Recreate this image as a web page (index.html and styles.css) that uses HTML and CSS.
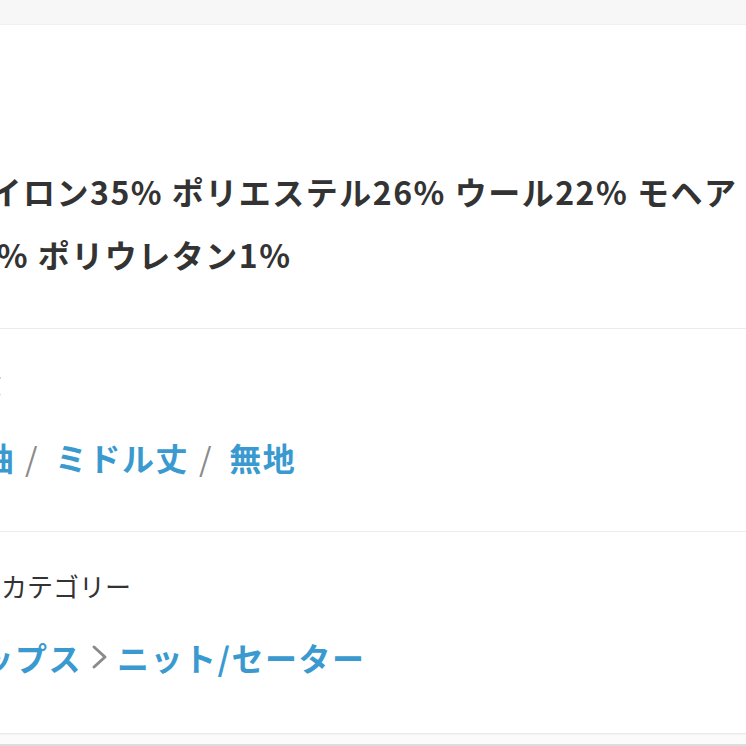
FILE: index.html
```html
<!DOCTYPE html>
<html lang="ja">
<head>
<meta charset="utf-8">
<link rel="stylesheet" href="styles.css">
</head>
<body>
<div class="topbar"></div>
<main class="page">
  <section class="sec sec-material">
    <p class="material">ナイロン35% ポリエステル26% ウール22% モヘア<br>16% ポリウレタン1%</p>
  </section>
  <section class="sec sec-feature">
    <div class="label">特徴</div>
    <div class="links">
      <a class="link">長袖</a><span class="sep">/</span><a class="link">ミドル丈</a><span class="sep">/</span><a class="link">無地</a>
    </div>
  </section>
  <section class="sec sec-category">
    <div class="label">商品カテゴリー</div>
    <div class="links crumbs">
      <a class="link">トップス</a><span class="chev"><svg width="18" height="26" viewBox="0 0 18 26"><path d="M4 3 L15 13 L4 23" fill="none" stroke="#8a8a8a" stroke-width="3" stroke-linecap="round" stroke-linejoin="round"/></svg></span><a class="link">ニット/セーター</a>
    </div>
  </section>
  <div class="footband"></div>
</main>
</body>
</html>
```
FILE: styles.css
```css
html, body {
  margin: 0;
  padding: 0;
  background: #ffffff;
  overflow: hidden;
  width: 746px;
  height: 746px;
}
body {
  font-family: "Noto Sans CJK JP", "Noto Sans", sans-serif;
  color: #333333;
}
.topbar {
  height: 24px;
  background: #f7f7f7;
  border-bottom: 1px solid #f0f0f0;
}
.page {
  margin-left: -44px;
  width: 790px;
}
.sec {
  border-bottom: 1px solid #ececec;
}
.sec-material {
  padding-top: 135px;
  padding-bottom: 42px;
}
.material {
  margin: 0;
  font-size: 32px;
  font-weight: 700;
  line-height: 63px;
  letter-spacing: 1.5px;
  white-space: nowrap;
}
.sec-feature {
  padding-top: 36px;
  padding-bottom: 50px;
}
.sec-category {
  padding-top: 36px;
  padding-bottom: 52px;
}
.label {
  margin-left: -7px;
  font-size: 26px;
  line-height: 36px;
  font-weight: 400;
  color: #333333;
}
.links {
  margin-top: 32px;
  margin-left: -8px;
  display: flex;
  align-items: center;
  height: 48px;
  font-size: 32px;
  font-weight: 700;
  letter-spacing: 1.5px;
}
.crumbs {
  margin-top: 29px;
  margin-left: -8px;
}
.link {
  color: #3a9ad0;
}
.sep {
  color: #8a8a8a;
  font-weight: 400;
  margin: 0 16px 0 10px;
}
.chev {
  display: flex;
  align-items: center;
  margin: 0 9px 0 8px;
}
.footband {
  height: 9px;
  background: #fbfbfb;
  border-top: 1px solid #f2f2f2;
  border-bottom: 2px solid #dcdcdc;
}
```
